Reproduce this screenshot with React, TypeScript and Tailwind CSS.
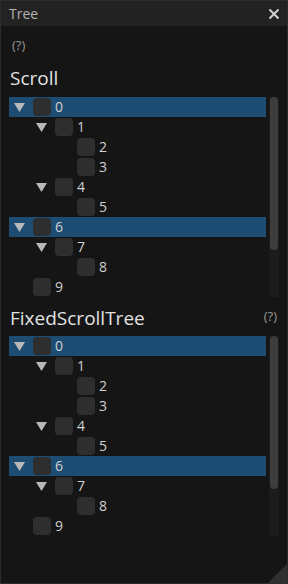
import React from "react";

interface Node {
  label: string;
  level: number;
  open?: boolean;
  selected?: boolean;
}

const nodes: Node[] = [
  { label: "0", level: 0, open: true, selected: true },
  { label: "1", level: 1, open: true },
  { label: "2", level: 2 },
  { label: "3", level: 2 },
  { label: "4", level: 1, open: true },
  { label: "5", level: 2 },
  { label: "6", level: 0, open: true, selected: true },
  { label: "7", level: 1, open: true },
  { label: "8", level: 2 },
  { label: "9", level: 0 },
];

const indent = ["pl-[5px]", "pl-[27px]", "pl-[49px]"];

function Arrow() {
  return (
    <svg width="11" height="9" viewBox="0 0 11 9" className="block">
      <polygon points="0,0 11,0 5.5,9" fill="#b8b8b8" />
    </svg>
  );
}

function TreeRow({ node }: { node: Node }) {
  return (
    <div
      className={`flex h-[20px] items-center ${indent[node.level]} ${
        node.selected ? "bg-[#1e4d74]" : ""
      }`}
    >
      <div className="flex w-[19px] shrink-0 items-center">{node.open && <Arrow />}</div>
      <div className="h-[18px] w-[18px] shrink-0 rounded-[4px] bg-[#2e2e2e]" />
      <span className="ml-[4px] text-[14px] leading-none text-[#d0d0d0]">{node.label}</span>
    </div>
  );
}

function TreeBox() {
  return (
    <div className="flex h-[200px] gap-[3px]">
      <div className="w-[257px]">
        {nodes.map((n) => (
          <TreeRow key={n.label} node={n} />
        ))}
      </div>
      {/* scrollbar */}
      <div className="w-[10px] bg-[#1c1c1c] px-[1px]">
        <div className="h-[153px] rounded-full bg-[#3d3d3d]" />
      </div>
    </div>
  );
}

export default function App() {
  return (
    <div
      className="relative flex h-[584px] w-[288px] flex-col border border-[#2c2c2c] bg-[#151515]"
      style={{ fontFamily: '"Open Sans", "Noto Sans", sans-serif' }}
    >
      <div className="flex h-[25px] items-center justify-between bg-[#222222] pl-[8px] pr-[7px]">
        <span className="text-[14px] text-[#b4b4b4]">Tree</span>
        <svg width="12" height="12" viewBox="0 0 12 12">
          <path d="M1.5 1.5 L10.5 10.5 M10.5 1.5 L1.5 10.5" stroke="#d0d0d0" strokeWidth="2" />
        </svg>
      </div>

      <div className="px-[8px]">
        <div className="mt-[12px] h-[14px] pl-[3px] text-[13px] leading-[14px] text-[#959595]">(?)</div>
        <div className="mt-[14px] h-[31px] pl-[1px] text-[19px] font-medium leading-[24px] text-[#e2e2e2]">
          Scroll
        </div>
        <TreeBox />

        <div className="mt-[10px] flex h-[29px] items-start justify-between">
          <span className="pl-[1px] text-[19px] font-medium leading-[22px] text-[#e2e2e2]">FixedScrollTree</span>
          <span className="mr-[2px] pt-[2px] text-[13px] leading-[14px] text-[#959595]">(?)</span>
        </div>
        <TreeBox />
      </div>

      {/* resize grip */}
      <svg width="19" height="19" viewBox="0 0 19 19" className="absolute bottom-0 right-0">
        <polygon points="19,0 19,19 0,19" fill="#303030" />
      </svg>
    </div>
  );
}
